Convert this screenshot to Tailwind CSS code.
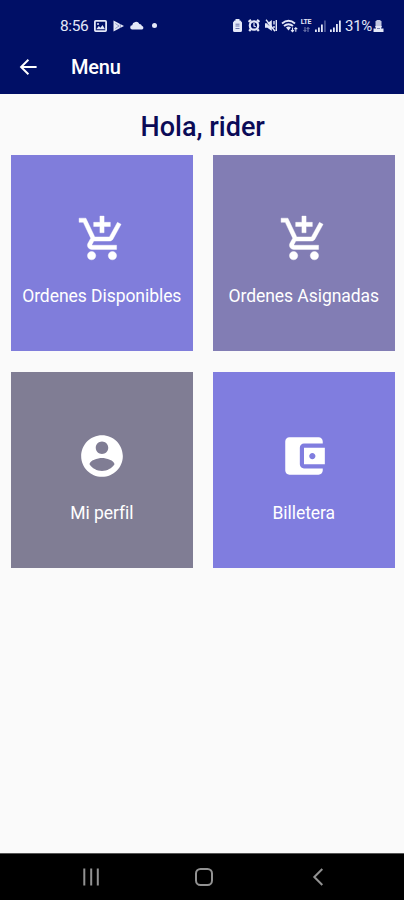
<!DOCTYPE html>
<html lang="es">
<head>
    <meta charset="UTF-8">
    <meta name="viewport" content="width=device-width, initial-scale=1.0">
    <title>Menu</title>
    <script src="https://cdn.jsdelivr.net/npm/@tailwindcss/browser@4"></script>
</head>
<body class="flex h-[900px] w-[404px] flex-col overflow-hidden bg-[#fafafa] font-[Roboto,sans-serif]">
    <!-- Header -->
    <header class="h-[94px] shrink-0 bg-[#000f66] text-white">
        <!-- Status bar -->
        <div class="flex h-[51px] items-center justify-between pr-5 pl-[60px] text-[#e4e8f8]">
            <div class="flex items-center">
                <span class="w-[34px] pt-[2px] text-[15.5px] tracking-[-0.4px]">8:56</span>
                <svg class="mr-[6px] h-[12px] w-[13px]" viewBox="0 0 13 12" fill="none" stroke="currentColor" stroke-width="1.8">
                    <rect x="0.9" y="0.9" width="11.2" height="10.2" rx="0.8"/>
                    <path d="M2.3 9.3l2.5-3.2 1.7 1.6 2-2.8 2.5 4.4z" fill="currentColor" stroke="none"/>
                    <circle cx="4" cy="4" r="1" fill="currentColor" stroke="none"/>
                </svg>
                <svg class="mr-[6px] h-[12px] w-[11px]" viewBox="0 0 11 12" fill="currentColor">
                    <path d="M0.5 0.5L11 6 0.5 11.5z"/>
                    <path d="M2.3 3.5L6 6 2.3 8.5M7.3 3v6" fill="none" stroke="#000f66" stroke-opacity=".45" stroke-width=".8"/>
                </svg>
                <svg class="mr-[8px] h-[9px] w-[14px]" viewBox="0 0 14 9" fill="currentColor">
                    <path d="M2.4 8.5a2.1 2.1 0 0 1-.2-4.2A3.8 3.8 0 0 1 9.4 3 3 3 0 0 1 12 5a1.8 1.8 0 0 1 0 3.5z"/>
                </svg>
                <span class="size-[5px] rounded-full bg-current"></span>
            </div>
            <div class="flex items-center">
                <svg class="mr-[5px] h-[13px] w-[11px]" viewBox="0 0 10 13" fill="currentColor">
                    <path d="M3 0h4v1.5h1L9.5 3.5v8Q9.5 13 8 13H2Q.5 13 .5 11.5v-8L2 1.5h1z"/>
                    <path d="M3 5.2h4M3 7h4M3 9.5h4" stroke="#000f66" stroke-opacity=".6" stroke-width=".9"/>
                </svg>
                <svg class="mr-[5px] h-[13px] w-[12px]" viewBox="0 0 12 13" fill="none" stroke="currentColor" stroke-width="2.2">
                    <circle cx="6" cy="6.5" r="4.2"/>
                    <path d="M.6 3L3 .9M11.4 3L9 .9M2.7 10.3L1.2 12M9.3 10.3l1.5 1.7"/>
                    <path d="M6 4v3l1.8.8" stroke-width="1.2"/>
                </svg>
                <svg class="mr-[4px] h-[13px] w-[12px]" viewBox="0 0 12 13" fill="currentColor">
                    <path d="M0 4.2h2.4L6.8 1v11L2.4 8.8H0z"/>
                    <path d="M1 .8l9 11.4M9 2v3.5M9 7v2M11.3 1v11" fill="none" stroke="currentColor" stroke-width="1.4"/>
                    <path d="M0 1.5l4 5" fill="none" stroke="#000f66" stroke-width=".6"/>
                </svg>
                <svg class="mr-[2px] h-[14px] w-[17px]" viewBox="0 0 17 14" fill="none" stroke="currentColor">
                    <path d="M1 4.5q6.5-5.4 13 0M3 7q4.5-3.7 9 0" stroke-width="1.9"/>
                    <path d="M5 8.5q2.5-1.8 5 0L7.5 11.5z" fill="currentColor" stroke="none"/>
                    <path d="M11.5 8.5v4.2M10 11.2l1.5 1.6 1.5-1.6M14.8 12.8V8.8M13.3 10.2l1.5-1.5 1.5 1.5" stroke-width="1.1"/>
                </svg>
                <div class="mr-[3px] flex h-[14px] w-[12px] flex-col items-center">
                    <span class="text-[7px] leading-[7px] font-bold tracking-[-0.2px]">LTE</span>
                    <svg class="mt-px h-[5px] w-[7px] opacity-60" viewBox="0 0 7 5" fill="none" stroke="currentColor" stroke-width=".9">
                        <path d="M2 0v4.5M.5 3L2 4.5 3.3 3M5 5V.5M3.7 2L5 .5 6.5 2"/>
                    </svg>
                </div>
                <svg class="mr-[4px] h-[12px] w-[11px]" viewBox="0 0 11 12" fill="currentColor">
                    <path d="M0 9.5h1.8V12H0zM3 7.5h1.8V12H3zM6 4.5h1.8V12H6z"/>
                    <path d="M9.3.5h1.3V12H9.3z" opacity=".45"/>
                </svg>
                <svg class="mr-[4px] h-[12px] w-[11px]" viewBox="0 0 11 12" fill="currentColor">
                    <path d="M0 9.5h1.8V12H0zM3 7.5h1.8V12H3zM6 4h1.8v8H6zM9 .5h1.8V12H9z"/>
                </svg>
                <span class="w-[28px] pt-px text-[15px] tracking-[-0.3px] whitespace-nowrap">31%</span>
                <svg class="h-[12px] w-[11px]" viewBox="0 0 11 12" fill="currentColor">
                    <path d="M3.5 0h4v1H8.5v5H2.5V1h1z" opacity=".85"/>
                    <path d="M2 6h7l-1 2.5h2.5V12H.5V8.5H3z"/>
                    <path d="M4 8.5h3" stroke="#000f66" stroke-opacity=".5" stroke-width=".9"/>
                </svg>
            </div>
        </div>

        <!-- App bar -->
        <div class="flex h-[31px] items-center pl-[16px]">
            <svg class="h-6 w-6" viewBox="0 0 24 24" fill="currentColor">
                <path d="M20.6 11H7.5l5.6-5.6L11.7 4l-8 8 8 8 1.4-1.4L7.5 13h13.1z"/>
            </svg>
            <h1 class="ml-[31px] text-[20px] font-medium tracking-[-0.2px]">Menu</h1>
        </div>
    </header>

    <!-- Main Content -->
    <main class="flex-1 pr-[9.5px] pl-[11px]">
        <h2 class="flex h-[61px] items-center justify-center pt-[6px] text-[27px] font-medium text-[#0b0b57]">Hola, rider</h2>
        <div class="grid grid-cols-2 gap-x-[20.5px] gap-y-[21px] text-[17.5px] tracking-[-0.05px] text-white">
            <a class="flex h-[196px] flex-col items-center bg-[#807ddb] pt-[59px]">
                <svg class="size-[50px]" viewBox="0 0 24 24" fill="currentColor" stroke="currentColor" stroke-width=".2">
                    <path d="M11 9h2V6h3V4h-3V1h-2v3H8v2h3v3zm-4 9c-1.1 0-1.99.9-1.99 2S5.9 22 7 22s2-.9 2-2-.9-2-2-2zm10 0c-1.1 0-1.99.9-1.99 2s.89 2 1.99 2 2-.9 2-2-.9-2-2-2zm-9.83-3.25l.03-.12.9-1.63h7.45c.75 0 1.41-.41 1.75-1.03l3.86-7.01L19.42 4h-.01l-1.1 2-2.76 5H8.53l-.13-.27L6.16 6l-.95-2-.94-2H1v2h2l3.6 7.59-1.35 2.45c-.16.28-.25.61-.25.96 0 1.1.9 2 2 2h12v-2H7.42c-.13 0-.25-.11-.25-.25z"/>
                </svg>
                <span class="mt-[19px] leading-[26px] whitespace-nowrap">Ordenes Disponibles</span>
            </a>
            <a class="flex h-[196px] flex-col items-center bg-[#827db4] pt-[59px]">
                <svg class="size-[50px]" viewBox="0 0 24 24" fill="currentColor" stroke="currentColor" stroke-width=".2">
                    <path d="M11 9h2V6h3V4h-3V1h-2v3H8v2h3v3zm-4 9c-1.1 0-1.99.9-1.99 2S5.9 22 7 22s2-.9 2-2-.9-2-2-2zm10 0c-1.1 0-1.99.9-1.99 2s.89 2 1.99 2 2-.9 2-2-.9-2-2-2zm-9.83-3.25l.03-.12.9-1.63h7.45c.75 0 1.41-.41 1.75-1.03l3.86-7.01L19.42 4h-.01l-1.1 2-2.76 5H8.53l-.13-.27L6.16 6l-.95-2-.94-2H1v2h2l3.6 7.59-1.35 2.45c-.16.28-.25.61-.25.96 0 1.1.9 2 2 2h12v-2H7.42c-.13 0-.25-.11-.25-.25z"/>
                </svg>
                <span class="mt-[19px] leading-[26px] whitespace-nowrap">Ordenes Asignadas</span>
            </a>
            <a class="flex h-[196px] flex-col items-center bg-[#807d94] pt-[59px]">
                <svg class="size-[50px]" viewBox="0 0 24 24" fill="currentColor">
                    <path d="M12 2C6.48 2 2 6.48 2 12s4.48 10 10 10 10-4.48 10-10S17.52 2 12 2zm0 3c1.66 0 3 1.34 3 3s-1.34 3-3 3-3-1.34-3-3 1.34-3 3-3zm0 14.2c-2.5 0-4.71-1.28-6-3.22.03-1.99 4-3.08 6-3.08 1.99 0 5.97 1.09 6 3.08-1.29 1.94-3.5 3.22-6 3.22z"/>
                </svg>
                <span class="mt-[19px] leading-[26px]">Mi perfil</span>
            </a>
            <a class="flex h-[196px] flex-col items-center bg-[#807ddf] pt-[59px]">
                <svg class="size-[50px]" viewBox="0 0 24 24" fill="currentColor">
                    <path d="M21 18v1c0 1.1-.9 2-2 2H5c-1.11 0-2-.9-2-2V5c0-1.1.89-2 2-2h14c1.1 0 2 .9 2 2v1h-9c-1.11 0-2 .9-2 2v8c0 1.1.89 2 2 2h9zm-9-2h10V8H12v8zm4-2.5c-.83 0-1.5-.67-1.5-1.5s.67-1.5 1.5-1.5 1.5.67 1.5 1.5-.67 1.5-1.5 1.5z"/>
                </svg>
                <span class="mt-[19px] leading-[26px]">Billetera</span>
            </a>
        </div>
    </main>

    <!-- Navigation bar -->
    <nav class="flex h-[47px] items-center justify-between border-t border-[#555] bg-black pr-[80px] pl-[82px] text-[#929292]">
        <svg class="h-[18px] w-[18px]" viewBox="0 0 18 18" stroke="currentColor" stroke-width="2">
            <path d="M2.3 .5v17M9.2 .5v17M15.8 .5v17"/>
        </svg>
        <svg class="mr-[4px] h-[18px] w-[18px]" viewBox="0 0 18 18" fill="none" stroke="currentColor" stroke-width="2">
            <rect x="1" y="1" width="16" height="16" rx="4.5"/>
        </svg>
        <svg class="h-[18px] w-[12px]" viewBox="0 0 12 18" fill="none" stroke="currentColor" stroke-width="2">
            <path d="M10.3 1L2.3 9l8 8"/>
        </svg>
    </nav>
</body>
</html>
